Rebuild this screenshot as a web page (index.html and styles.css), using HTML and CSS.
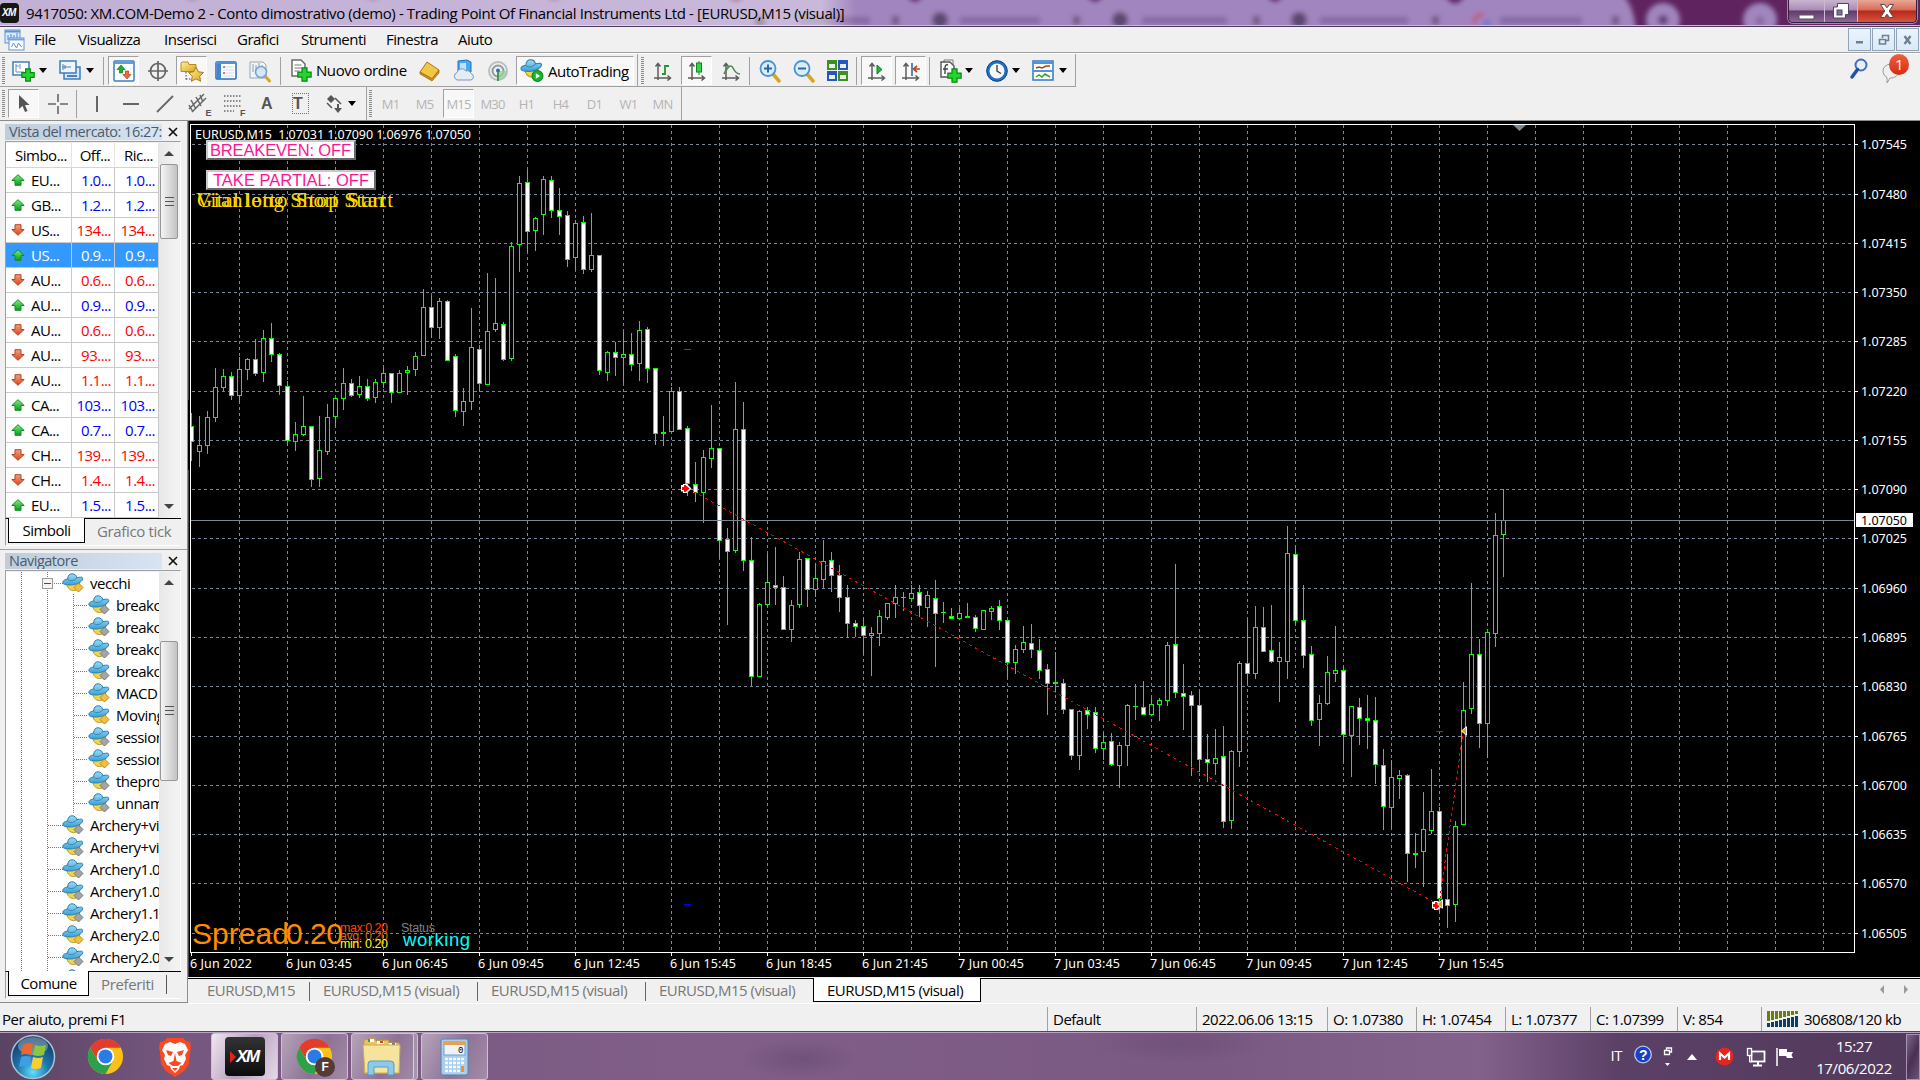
FILE: index.html
```html
<!DOCTYPE html>
<html lang="it">
<head>
  <meta charset="UTF-8">
  <title>9417050: XM.COM-Demo 2 - EURUSD,M15</title>
  <link rel="stylesheet" href="styles.css">
</head>
<body>

  <!-- icone condivise -->
  <svg class="defs" width="0" height="0">
    <defs>
      <linearGradient id="gGreen" x1="0" y1="0" x2="0" y2="1"><stop offset="0" stop-color="#7df07d"/><stop offset="1" stop-color="#0a9a1c"/></linearGradient>
      <linearGradient id="gRed" x1="0" y1="0" x2="0" y2="1"><stop offset="0" stop-color="#f3a184"/><stop offset="1" stop-color="#d8431a"/></linearGradient>
      <linearGradient id="gGold" x1="0" y1="0" x2="1" y2="1"><stop offset="0" stop-color="#fff0a0"/><stop offset="1" stop-color="#d9a51c"/></linearGradient>
      <linearGradient id="gHat" x1="0" y1="0" x2="0" y2="1"><stop offset="0" stop-color="#9bdcf5"/><stop offset="1" stop-color="#3c9fd2"/></linearGradient>
      <radialGradient id="gOrb" cx="50%" cy="85%" r="80%"><stop offset="0" stop-color="#5fe0ff"/><stop offset=".45" stop-color="#1f76ad"/><stop offset="1" stop-color="#123a63"/></radialGradient>
      <filter id="soft"><feGaussianBlur stdDeviation="2.5"/></filter>

      <symbol id="up" viewBox="0 0 14 12"><path d="M7 .7 13.2 6.5H10v4.8H4V6.5H.8z" fill="url(#gGreen)" stroke="#138a24"/></symbol>
      <symbol id="down" viewBox="0 0 14 12"><path d="M7 11.3 .8 5.5H4V.7h6v4.8h3.2z" fill="url(#gRed)" stroke="#b5431f"/></symbol>
      <symbol id="ea" viewBox="0 0 22 20">
        <path d="M4.500 9c0 5 3 8.500 7 8.500s6-3 6-7.500z" fill="#f3d548" stroke="#b99522"/>
        <path d="M1 10C.2 7.200 4 6.300 5.500 6 6 2.300 7.500.8 10 .8S14.500 2.300 14.800 4.700C18 4 21 3.600 20.700 5.800 20 9.300 14 11.800 8.500 12 4 12 1.300 11.500 1 10z" fill="url(#gHat)" stroke="#2a7fb0"/>
        <path d="M5.500 6.500q4.500 3 9.300-1.500" fill="none" stroke="#2a7fb0" stroke-width=".8"/>
      </symbol>
      <symbol id="plus" viewBox="0 0 12 12"><path d="M4 .7h4V4h3.300v4H8v3.300H4V8H.7V4H4z" fill="#23d52c" stroke="#078a12"/></symbol>
      <symbol id="axes" viewBox="0 0 20 20"><path d="M5 19V3M2.500 5.500 5 2.500 7.500 5.500M1 17h16M14.500 14.500 17.500 17 14.500 19.500" fill="none" stroke="#5c5c5c" stroke-width="1.500"/></symbol>
      <symbol id="chrome" viewBox="0 0 40 40">
        <circle cx="20" cy="20" r="19" fill="#fbc116"/>
        <path d="M3.500 10.500A19 19 0 0 1 36.500 10.500H20L11.800 24.700z" fill="#e33b2e"/>
        <path d="M3.500 10.500A19 19 0 0 0 20 39L28.200 24.700 11.800 24.700z" fill="#2da04a"/>
        <circle cx="20" cy="20" r="9.500" fill="#fff"/><circle cx="20" cy="20" r="7.500" fill="#2a7be8"/>
      </symbol>
    </defs>
  </svg>

  <header class="titlebar">
    <svg class="glass" width="1920" height="27">
      <rect width="1920" height="27" fill="#5f2460"/>
      <g filter="url(#soft)">
        <path d="M-10 -5H184Q192 4 200 -5H365Q373 4 381 -5H546Q554 4 562 -5H728Q736 8 744 -5H907Q915 8 923 -5H1087Q1095 8 1103 -5H1267Q1275 8 1283 -5H1445Q1455 12 1465 -5H1622Q1634 4 1636 32H-10z" fill="#a185be"/>
        <g fill="#5c4870"><circle cx="760" cy="22" r="6"/><circle cx="940" cy="20" r="8"/><circle cx="1120" cy="20" r="8"/><circle cx="1299" cy="20" r="8"/></g>
        <g fill="#6d5780"><rect x="892" y="16" width="7" height="9"/><rect x="1073" y="16" width="7" height="9"/><rect x="1253" y="16" width="7" height="9"/><rect x="1432" y="16" width="7" height="9"/><rect x="1612" y="16" width="7" height="9"/></g>
        <g fill="#8169a0"><rect x="800" y="17" width="70" height="7"/><rect x="960" y="17" width="80" height="7"/><rect x="1142" y="17" width="85" height="7"/><rect x="1320" y="17" width="88" height="7"/><rect x="1500" y="17" width="82" height="7"/></g>
        <circle cx="1663" cy="20" r="17" fill="#a185be"/><circle cx="1760" cy="20" r="17" fill="#a185be"/>
        <circle cx="1663" cy="20" r="5" fill="#5b3f72"/><circle cx="1760" cy="21" r="4" fill="#80629b"/>
        <path d="M1475 24a7 7 0 0 1 9-9" stroke="#c25378" stroke-width="4" fill="none"/><path d="M1485 25l4-4" stroke="#4a6fd2" stroke-width="5"/>
      </g>
      <rect y="25" width="1920" height="1" fill="#cdb7df"/>
      <rect y="26" width="1920" height="1" fill="#4b3a5c"/>
    </svg>
    <div class="caption">
      <svg width="19" height="21" viewBox="0 0 19 21"><rect width="19" height="20" rx="4" fill="#161616"/></svg>
      <b class="xm small">X<i>M</i></b>
      <span>9417050: XM.COM-Demo 2 - Conto dimostrativo (demo) - Trading Point Of Financial Instruments Ltd - [EURUSD,M15 (visual)]</span>
    </div>
    <div class="winbtns">
      <span class="wb min"><svg width="18" height="16"><rect x="1" y="9" width="15" height="4" fill="#fff" stroke="#555"/></svg></span>
      <span class="wb max"><svg width="18" height="18"><path d="M5.500 1.500h11v11h-3v3.500h-12v-11h4z" fill="#fff" stroke="#4d4860"/><rect x="5" y="8" width="5" height="5" fill="#82708f" stroke="#4d4860"/></svg></span>
      <span class="wb close"><svg width="16" height="16"><path d="M1.500 1.500h4L8 4.800l2.500-3.300h4L10.200 8l4.300 6.500h-4L8 11.200l-2.500 3.300h-4L5.800 8z" fill="#fff" stroke="#5a4a52"/></svg></span>
    </div>
  </header>

  <nav class="menubar">
    <svg class="appicon" width="22" height="22" viewBox="0 0 22 22"><rect x="1" y="1" width="15" height="13" fill="#dbeafb" stroke="#5b93d3"/><path d="M1 2.500h15" stroke="#5b93d3" stroke-width="2"/><path d="M4 11V6M7 9V5M10 11V6M13 9V4" stroke="#4a86d0"/><rect x="5" y="9" width="15" height="12" fill="#fff" stroke="#5b93d3"/><path d="M5 10.500h15" stroke="#6fa5de" stroke-width="2"/><path d="M7.500 18l2-4 3 5 2-5 3 4" fill="none" stroke="#5d8fce"/></svg>
    <span class="m1">File</span><span class="m2">Visualizza</span><span class="m3">Inserisci</span><span class="m4">Grafici</span><span class="m5">Strumenti</span><span class="m6">Finestra</span><span class="m7">Aiuto</span>
    <div class="mdi">
      <span><svg width="10" height="10"><rect x="1" y="6" width="7" height="2.500" fill="#6f7f92"/></svg></span>
      <span><svg width="12" height="12"><path d="M4.500 4V1.500h6v5H8M1.500 5.500h6v4.500h-6zM1 5.500h7M4 1.500h7" fill="none" stroke="#6f7f92" stroke-width="1.600"/></svg></span>
      <span><svg width="10" height="10"><path d="M1.500 1l6 8M7.500 1l-6 8" stroke="#6f7f92" stroke-width="2.400"/></svg></span>
    </div>
  </nav>

  <div class="toolbars">
    <div class="tools row1">
      <i class="grip"></i>
      <span class="tool drop d1"><svg width="24" height="24" viewBox="0 0 24 24"><rect x="1" y="3" width="16" height="13" fill="#fff" stroke="#3d7dbd" stroke-width="1.500"/><path d="M4 5v8h8M4 7h3M8 5v5" stroke="#6a8fb5" fill="none"/><use href="#plus" x="9" y="9" width="14" height="14"/></svg><i class="arr"></i></span>
      <span class="tool drop d2"><svg width="22" height="24" viewBox="0 0 22 24"><rect x="5" y="8" width="16" height="12" fill="#d5e7fa" stroke="#3d7dbd" stroke-width="1.500"/><path d="M8 17h10" stroke="#4d82bb" stroke-width="2"/><rect x="1" y="2" width="16" height="12" fill="#eef5fd" stroke="#3d7dbd" stroke-width="1.500"/><path d="M4 5v6M3 8h9M6 6v4" stroke="#5c7da2" fill="none"/></svg><i class="arr"></i></span>
      <i class="sep"></i>
      <span class="tool on"><svg width="22" height="22" viewBox="0 0 22 22"><rect x="1" y="1" width="20" height="20" rx="1" fill="#fff" stroke="#3d7dbd" stroke-width="1.500"/><path d="M1 3h20" stroke="#5c9ee0" stroke-width="2"/><path d="M8 5l4 4.500H9.500V13h-3V9.500H4z" fill="#1fae2c" stroke="#0c7c1a" stroke-width=".7"/><path d="M14 19l-4-4.500h2.500V11h3v3.500H18z" fill="#ef6a3c" stroke="#b83c14" stroke-width=".7"/></svg></span>
      <span class="tool"><svg width="22" height="22" viewBox="0 0 22 22" fill="none" stroke="#646464" stroke-width="1.700"><circle cx="11" cy="11" r="7.500"/><path d="M11 1v20M1 11h20"/></svg></span>
      <span class="tool on"><svg width="24" height="22" viewBox="0 0 24 22"><path d="M1 3V11.500H16V4.500H9L8 2H2z" fill="url(#gGold)" stroke="#b98c18"/><path d="M6 12v8M6 19h5" stroke="#444" stroke-dasharray="1.500 1.500"/><path d="M16 7l2.300 4.800 5.200.7-3.800 3.600.9 5.200-4.600-2.500-4.600 2.500.9-5.200-3.800-3.600 5.200-.7z" fill="url(#gGold)" stroke="#a87b17"/></svg></span>
      <span class="tool"><svg width="22" height="20" viewBox="0 0 22 20"><rect x="1" y="1" width="20" height="17" rx="1" fill="#fff" stroke="#2a68b6" stroke-width="1.500"/><path d="M1 2h20" stroke="#4d94de" stroke-width="2"/><rect x="2" y="3" width="4" height="15" fill="#3d86d6"/><path d="M8 6h11M8 9h11M8 12h11M8 15h11" stroke="#cbd8ea"/><path d="M8 6h2M8 12h2" stroke="#c00"/></svg></span>
      <span class="tool"><svg width="24" height="24" viewBox="0 0 24 24"><path d="M2 3h13l3 3v13H2z" fill="#f2f5f8" stroke="#9aa6b0"/><path d="M5 5v8M8 6v9M11 4v8M14 6v6" stroke="#86a0b8"/><path d="M17 17l4.500 5" stroke="#d9a622" stroke-width="3" stroke-linecap="round"/><circle cx="13" cy="13" r="5.500" fill="#cfe6f9cc" stroke="#79a5c8" stroke-width="1.600"/></svg></span>
      <i class="sep wide"></i>
      <span class="tool order"><svg width="24" height="24" viewBox="0 0 24 24"><path d="M3 2h9l4 4v12H3z" fill="#fff" stroke="#6b6b6b" stroke-width="1.500"/><path d="M5.500 7h7M5.500 10h7M5.500 13h5" stroke="#777"/><use href="#plus" x="8" y="9" width="15" height="15"/></svg>Nuovo ordine</span>
      <span class="tool"><svg width="22" height="22" viewBox="0 0 22 22"><path d="M1 12L8 2l12 8-7 10z" fill="#f2c744" stroke="#a87414"/><path d="M1 12l12 6.500 7-8.500v3l-7 8L1 14z" fill="#c98e20" stroke="#9b6a10" stroke-width=".7"/></svg></span>
      <span class="tool"><svg width="24" height="24" viewBox="0 0 24 24"><path d="M6 2l9-1 4 2v10H6z" fill="#4aa8ee" stroke="#1d72bb"/><path d="M8 4h6v7H8z" fill="#bfe2fb"/><path d="M5 21a4 4 0 0 1 0-7.500A5 5 0 0 1 14 12a4 4 0 0 1 5 2.500A3.400 3.400 0 0 1 19 21z" fill="#e4ecf6" stroke="#7f96b5"/></svg></span>
      <span class="tool"><svg width="22" height="22" viewBox="0 0 22 22" fill="none"><circle cx="11" cy="11" r="9" stroke="#b7c0bd" stroke-width="2"/><circle cx="11" cy="11" r="5.500" stroke="#8c9aa0" stroke-width="2"/><path d="M11 11v9a9 9 0 0 0 9-9" fill="#9ad0a0" stroke="none" opacity=".8"/><circle cx="11" cy="10.500" r="2" fill="#2d70ba"/><path d="M11 12v9" stroke="#3da04a" stroke-width="2"/></svg></span>
      <span class="tool on auto"><svg width="24" height="24" viewBox="0 0 22 22"><use href="#ea" width="21" height="19"/><circle cx="16" cy="15.500" r="5" fill="#17b42c" stroke="#0c8a1c"/><path d="M14.500 13v5l4-2.500z" fill="#fff"/></svg>AutoTrading</span>
      <i class="sep end"></i>
      <i class="grip g2"></i>
      <span class="tool"><svg width="20" height="20"><use href="#axes"/><path d="M12 4v10M12 5h4M9 13h3" stroke="#1d9632" stroke-width="1.800"/></svg></span>
      <span class="tool on"><svg width="20" height="20"><use href="#axes"/><path d="M12 0v14" stroke="#178a2a"/><rect x="9.500" y="2" width="5" height="9" fill="#2fd648" stroke="#0c8a1c"/></svg></span>
      <span class="tool"><svg width="20" height="20"><use href="#axes"/><path d="M3 13q6-12 9-6t7 6" fill="none" stroke="#4b8a50" stroke-width="1.600"/></svg></span>
      <i class="sep"></i>
      <span class="tool"><svg width="24" height="24" viewBox="0 0 24 24"><path d="M15 15l6 7" stroke="#d9a622" stroke-width="3.500" stroke-linecap="round"/><circle cx="10" cy="9.500" r="7.500" fill="#d9edfb" stroke="#4b93cf" stroke-width="1.800"/><path d="M6 9.500h8M10 5.500v8" stroke="#2b66a8" stroke-width="2"/></svg></span>
      <span class="tool"><svg width="24" height="24" viewBox="0 0 24 24"><path d="M15 15l6 7" stroke="#d9a622" stroke-width="3.500" stroke-linecap="round"/><circle cx="10" cy="9.500" r="7.500" fill="#d9edfb" stroke="#4b93cf" stroke-width="1.800"/><path d="M6 9.500h8" stroke="#2b66a8" stroke-width="2"/></svg></span>
      <span class="tool"><svg width="22" height="22" viewBox="0 0 22 22"><path d="M0 0h10v10H0z" fill="#3f8f23"/><path d="M11 0h10v10H11zM0 11h10v10H0z" fill="#2458c0"/><path d="M11 11h10v10H11z" fill="#3f8f23"/><path d="M2 4h6v4H2zM13 4h6v4h-6zM2 15h6v4H2zM13 15h6v4h-6z" fill="#e7f2e4"/></svg></span>
      <i class="sep"></i>
      <span class="tool on"><svg width="20" height="20"><use href="#axes"/><path d="M10 4v9l5-4.500z" fill="#24b53a" stroke="#128024"/></svg></span>
      <span class="tool on"><svg width="20" height="20"><use href="#axes"/><path d="M11 2v13" stroke="#2a6bb0" stroke-width="1.600"/><path d="M19 8h-5M16 5l-3.500 3 3.500 3" stroke="#c8401c" stroke-width="1.700" fill="none"/></svg></span>
      <i class="sep"></i>
      <span class="tool drop d3"><svg width="24" height="24" viewBox="0 0 24 24"><path d="M5 1h9v13H5z" fill="#fff" stroke="#777"/><path d="M2 3h9l4 4v11H2z" fill="#fff" stroke="#555" stroke-width="1.400"/><path d="M9 6q-3-1-3 3v6M4 10h5" fill="none" stroke="#444" stroke-width="1.400"/><use href="#plus" x="8" y="9" width="15" height="15"/></svg><i class="arr"></i></span>
      <span class="tool drop d4"><svg width="22" height="22" viewBox="0 0 22 22"><circle cx="11" cy="11" r="9" fill="#f4f8fc" stroke="#1f6fc4" stroke-width="3"/><circle cx="11" cy="11" r="10.300" fill="none" stroke="#0f468a"/><path d="M11 5v6l4 2.500" fill="none" stroke="#444" stroke-width="1.400"/></svg><i class="arr"></i></span>
      <span class="tool drop d5"><svg width="22" height="22" viewBox="0 0 22 22"><rect x="1" y="1" width="20" height="19" fill="#fff" stroke="#3579c0" stroke-width="1.500"/><path d="M1 3h20M1 11h20" stroke="#4d94de" stroke-width="2"/><path d="M4 8l3-1 3 1 4-2 4 0" stroke="#b23c24" fill="none" stroke-width="1.500"/><path d="M4 17l3-2 3 2 3-3 5 3" stroke="#3b9b45" fill="none" stroke-width="1.500"/></svg><i class="arr"></i></span>
      <i class="sep end"></i>
      <div class="right">
        <svg width="20" height="22" viewBox="0 0 20 22"><circle cx="12" cy="7" r="5.500" fill="#e6effa" stroke="#3f6fc4" stroke-width="2"/><path d="M8.500 11.500L3 19" stroke="#2450ac" stroke-width="3.500" stroke-linecap="round"/></svg>
        <span class="chat"><svg width="20" height="22" viewBox="0 0 20 22"><path d="M2 10a8 7 0 1 1 7 6l-3 5 0-5.500A7 7 0 0 1 2 10z" fill="#f0f0f0" stroke="#9b9b9b"/></svg><b>1</b></span>
      </div>
    </div>
    <div class="tools row2">
      <i class="grip"></i>
      <span class="tool on"><svg width="14" height="20" viewBox="0 0 14 20"><path d="M2 1v14l3.500-3 2.500 6 2.500-1-2.500-6h4.500z" fill="#555"/></svg></span>
      <span class="tool"><svg width="20" height="20"><path d="M10 0v8M10 12v8M0 10h8M12 10h8" stroke="#666" stroke-width="1.600"/></svg></span>
      <i class="sep"></i>
      <span class="tool"><svg width="20" height="20"><path d="M10 2v16" stroke="#666" stroke-width="2"/></svg></span>
      <span class="tool"><svg width="20" height="20"><path d="M2 10h16" stroke="#666" stroke-width="2"/></svg></span>
      <span class="tool"><svg width="20" height="20"><path d="M2 18L18 2" stroke="#666" stroke-width="1.800"/></svg></span>
      <span class="tool"><svg width="24" height="24"><path d="M2 17L17 2M5 20L19 6M4 8l5 9M9 5l5 9M13 3l3 7M2 13l4 7" stroke="#666" stroke-width="1.500"/></svg><sub>E</sub></span>
      <span class="tool"><svg width="22" height="22"><path d="M2 3h18M2 8h18M2 13h18M2 18h10" stroke="#666" stroke-width="1.600" stroke-dasharray="1.500 1.500"/></svg><sub>F</sub></span>
      <span class="tool"><b class="glyph">A</b></span>
      <span class="tool"><b class="glyph box">T</b></span>
      <span class="tool drop d6"><svg width="20" height="20"><path d="M6 1l4 4-4 4-4-4zM14 10v4h3l-4 5-4-5h3v-4z" fill="#555"/><path d="M2 9l5 5M10 4l6 6" stroke="#555" stroke-width="1.500"/></svg><i class="arr"></i></span>
      <i class="sep end"></i>
      <i class="grip g3"></i>
      <span class="tool tf">M1</span><span class="tool tf">M5</span><span class="tool tf on">M15</span><span class="tool tf">M30</span><span class="tool tf">H1</span><span class="tool tf">H4</span><span class="tool tf">D1</span><span class="tool tf">W1</span><span class="tool tf">MN</span>
      <i class="sep end"></i>
    </div>
  </div>

  <main>
    <aside>
      <section class="panel market">
        <h2><span>Vista del mercato: 16:27:</span><svg width="10" height="10"><path d="M1 1l8 8M9 1L1 9" stroke="#111" stroke-width="1.700"/></svg></h2>
        <div class="box">
          <div class="list">
            <div class="mrow head"><span>Simbo...</span><span>Off...</span><span>Ric...</span></div>
            <div id="quotes"></div>
          </div>
          <div class="scroll"><i class="sa up"></i><i class="thumb"></i><i class="sa dn"></i></div>
        </div>
        <div class="ptabs"><span class="act">Simboli</span><span class="off">Grafico tick</span></div>
      </section>
      <section class="panel navi">
        <h2><span>Navigatore</span><svg width="10" height="10"><path d="M1 1l8 8M9 1L1 9" stroke="#111" stroke-width="1.700"/></svg></h2>
        <div class="box">
          <div class="list" id="tree"></div>
          <div class="scroll"><i class="sa up"></i><i class="thumb"></i><i class="sa dn"></i></div>
        </div>
        <div class="ptabs"><span class="act">Comune</span><span class="off">Preferiti</span><i></i></div>
      </section>
    </aside>

    <div class="work">
      <svg id="chart" width="1732" height="856" viewBox="188 121 1732 856"></svg>
      <div class="ctabs">
        <span class="t0">EURUSD,M15</span><span>EURUSD,M15 (visual)</span><span>EURUSD,M15 (visual)</span><span>EURUSD,M15 (visual)</span><span class="act">EURUSD,M15 (visual)</span>
        <svg width="34" height="14" viewBox="0 0 34 14"><path d="M7 2v9L3 6.500zM27 2v9l4-4.500z" fill="#9a9a9a"/></svg>
      </div>
    </div>
  </main>

  <footer class="status">
    <span class="help">Per aiuto, premi F1</span>
    <span class="s1">Default</span><span class="s2">2022.06.06 13:15</span><span class="s3">O: 1.07380</span><span class="s4">H: 1.07454</span><span class="s5">L: 1.07377</span><span class="s6">C: 1.07399</span><span class="s7">V: 854</span>
    <span class="s8"><svg id="conn" width="32" height="17"></svg>306808/120 kb</span>
  </footer>

  <div class="taskbar">
    <svg class="orb" width="46" height="46" viewBox="0 0 46 46"><circle cx="23" cy="23" r="21.500" fill="url(#gOrb)" stroke="#a9c4d6" stroke-width="1.500"/><ellipse cx="23" cy="12" rx="15" ry="9" fill="#fff" opacity=".3"/><path d="M13 11q5-3 10-1l-2 11q-5-2-10 0z" fill="#f0652b"/><path d="M25 11q5 2 11 0l-2 10q-6 2-11 0z" fill="#8cc63c"/><path d="M11 23q5-2 10 0l-2 10q-4-2-10 0z" fill="#3f9fe6"/><path d="M23 23q5 2 10 0l-2 11q-5 2-10 0z" fill="#fccc33"/></svg>
    <svg class="t-chrome" width="37" height="37"><use href="#chrome"/></svg>
    <svg class="t-brave" width="34" height="40" viewBox="0 0 34 40"><path d="M9 1h16l3 3 4 1 1 6-1 4-1 12-5 7-9 6-9-6-5-7-1-12-1-4 1-6 4-1z" fill="#fb4a22"/><path d="M17 7l5-2 5 2 3 6-3 5 1 4-3 6-3 1-1 3-4 4-4-4-1-3-3-1-3-6 1-4-3-5 3-6 5-2z" fill="#fff"/><path d="M8 13l7 2-2 4-3-1zM26 13l-7 2 2 4 3-1zM17 16l1.500 8 5 2-4 3h-5l-4-3 5-2zM14 31h6l-3 3z" fill="#fb4a22"/></svg>
    <span class="tb hot"><span class="xmlogo"><svg width="6" height="14" viewBox="0 0 6 14"><path d="M0 1l6 6-6 6z" fill="#e2231a"/></svg><b class="xm">XM</b></span></span>
    <span class="tb"><svg width="40" height="40" viewBox="0 0 40 40"><use href="#chrome" x="1" y="1" width="37" height="37"/></svg><b class="badge">F</b></span>
    <span class="tb multi"><svg width="42" height="40" viewBox="0 0 42 40"><path d="M3 3l10-2 2 3 12-1 1 3 10 0v30H3z" fill="#e6c566" stroke="#c59d39"/><path d="M7 2h6v3H7zM16 4h7v3h-7zM28 6h7v3h-7z" fill="#fff"/><path d="M7 2h2v3H7z" fill="#2fa45a"/><path d="M19 4h3v2h-3z" fill="#d8452f"/><path d="M31 6h3v2h-3z" fill="#2b8ad0"/><path d="M2 8h37l-1 28H4z" fill="#f6e49c" stroke="#d2ae4d"/><path d="M7 38V27q0-3 3-3h19q4 0 4 3v11h-6v-8H13v8z" fill="#8cc9ea" stroke="#4f9dcb"/></svg></span>
    <span class="tb calc"><svg width="30" height="38" viewBox="0 0 30 38"><rect x="1" y="1" width="27" height="36" rx="2" fill="#a9cdea" stroke="#4e86b5"/><rect x="4" y="4" width="21" height="13" fill="#eef5fa" stroke="#6aa2d0"/><rect x="4" y="4" width="21" height="3" fill="#e9a14c"/><path d="M5 21h19M5 25h19M5 29h19M5 33h19" stroke="#f5fafe" stroke-width="2.500" stroke-dasharray="3 1"/><path d="M21 28h3v6h-3z" fill="#f0941f"/><text x="18" y="15" font-size="9" font-family="Liberation Mono">0</text></svg></span>
    <div class="tray">
      <span class="lang">IT</span>
      <svg width="18" height="19" viewBox="0 0 18 19"><circle cx="9" cy="9.500" r="8.300" fill="#1b40c8" stroke="#b9c8ef" stroke-width="1.300"/><text x="9" y="14.500" text-anchor="middle" font-size="14" font-weight="bold" fill="#fff" font-family="Liberation Sans">?</text></svg>
      <svg class="opt" width="10" height="22" viewBox="0 0 10 22"><path d="M3.500 5V2h5v4h-2M1.500 4.500h5v4h-5z" fill="none" stroke="#fff" stroke-width="1.300"/><path d="M2 17h5l-2.500 3z" fill="#fff"/></svg>
      <svg class="upa" width="10" height="6"><path d="M0 6h10L5 0z" fill="#fff"/></svg>
      <svg class="mega" width="19" height="19"><circle cx="9.500" cy="9.500" r="9" fill="#e5261d"/><path d="M5 13V6.500l4.500 4 4.500-4V13" fill="none" stroke="#fff" stroke-width="2.200"/></svg>
      <svg class="net" width="20" height="20" viewBox="0 0 20 20"><rect x="5.500" y="4.500" width="13" height="10" fill="#5d4a66" stroke="#fff" stroke-width="1.800"/><path d="M7 18.500h9M12 15v3" stroke="#fff" stroke-width="2"/><rect x="1.500" y="1.500" width="4" height="7" fill="#5d4a66" stroke="#fff" stroke-width="1.300"/><path d="M3.500 9v6h2" stroke="#fff" fill="none"/></svg>
      <svg class="flag" width="20" height="20" viewBox="0 0 20 20"><path d="M2 1v18" stroke="#fff" stroke-width="1.500"/><path d="M4 2h8v3h6l-1.500 3 1.500 3h-6l-1-2H4z" fill="#fff"/></svg>
      <div class="clock"><span>15:27</span><span>17/06/2022</span></div>
      <i class="desk"></i>
    </div>
  </div>

  <script src="app.js"></script>
</body>
</html>
```
FILE: styles.css
```css
* { box-sizing: border-box; }
body {
  margin: 0;
  width: 1920px;
  height: 1080px;
  overflow: hidden;
  display: grid;
  grid-template-rows: 27px 26px 68px 882px 29px 48px;
  background: #f0f0f0;
  font: 15px/20px "Open Sans", "Noto Sans", sans-serif;
  letter-spacing: -0.5px;
  color: #000;
}
.defs { position: absolute; }
i { font-style: normal; }
svg { display: block; flex: none; }

/* title bar */
.titlebar { position: relative; display: flex; justify-content: space-between; }
.glass { position: absolute; left: 0; top: 0; }
.caption {
  position: relative;
  display: flex;
  align-items: center;
  height: 26px;
  width: 856px;
  white-space: nowrap;
  letter-spacing: -0.38px;
  background: linear-gradient(90deg, rgba(255,255,255,.35), rgba(255,255,255,.42) 96%, transparent);
}
.caption span { margin-left: 7px; }
.xm { font: italic bold 17px "Liberation Sans", sans-serif; letter-spacing: -1.5px; color: #fff; }
.xm i { font-style: italic; }
.xm.small { position: absolute; left: 2px; top: 7px; font-size: 10px; line-height: 12px; letter-spacing: -.6px; }
.winbtns {
  position: relative;
  display: flex;
  width: 129px;
  height: 23px;
  margin-right: 3px;
  border: 1px solid #33203c;
  border-top: 0;
  border-radius: 0 0 5px 5px;
  overflow: hidden;
  box-shadow: 0 0 0 1px rgba(255,255,255,.45);
}
.wb { display: flex; align-items: center; justify-content: center; border-right: 1px solid #cbb9d4; background: linear-gradient(#c9b5cf 0, #a98bb4 45%, #603a6c 50%, #8a6a96); }
.wb.min { width: 36px; padding-top: 5px; }
.wb.max { width: 33px; }
.wb.close { flex: 1; border: 0; background: linear-gradient(#e9a796 0, #d96c55 45%, #b6281a 50%, #d8553c); }

/* menu */
.menubar { display: flex; align-items: center; height: 26px; border-bottom: 1px solid #a0a0a0; padding-left: 4px; letter-spacing: -.5px; }
.menubar > span { flex: none; white-space: nowrap; padding-bottom: 2px; }
.appicon { margin-right: 8px; }
.m1 { width: 44px; } .m2 { width: 86px; } .m3 { width: 73px; } .m4 { width: 64px; } .m5 { width: 85px; } .m6 { width: 72px; }
.mdi { margin-left: auto; display: flex; gap: 1px; padding-right: 1px; }
.mdi span { display: flex; align-items: center; justify-content: center; width: 23px; height: 23px; border: 1px solid #91a3b7; background: linear-gradient(#eaf4fd, #dbeaf8); }

/* toolbars */
.toolbars { border-top: 1px solid #fff; border-bottom: 1px solid #8c8c8c; background: #f0f0f0; }
.tools { display: flex; align-items: center; gap: 3px; }
.row1 { height: 33px; background: linear-gradient(90deg, #a0a0a0 1076px, transparent 0) 0 32px / 100% 1px no-repeat; }
.row2 { height: 33px; }
.grip { width: 3px; height: 28px; margin: 0 0 0 2px; background: repeating-linear-gradient(#8a8a8a 0 1px, transparent 1px 2px); }
.sep { width: 2px; height: 28px; border-left: 1px solid #a0a0a0; }
.sep.wide { margin-left: 2px; }
.sep.end { height: 33px; }
.grip.g2 { margin-left: -1px; }
.grip.g3 { margin-left: -2px; }
.tool { position: relative; flex: none; width: 31px; height: 29px; display: flex; align-items: center; justify-content: center; white-space: nowrap; }
.tool.on { border: 1px solid #a0a0a0; border-right-color: #fff; border-bottom-color: #fff; background: #f8f8f8; }
.tool.drop { justify-content: flex-start; }
.arr { border: 5px solid transparent; border-top-color: #000; border-bottom: 0; transform: scaleX(.8); }
.d1 { width: 43px; padding-left: 4px; } .d1 .arr { margin-left: 2px; }
.d2 { width: 46px; padding-left: 5px; } .d2 .arr { margin-left: 4px; }
.d3 { width: 44px; padding-left: 5px; } .d3 .arr { margin-left: 1px; }
.d4 { width: 44px; padding-left: 5px; } .d4 .arr { margin-left: 3px; }
.d5 { width: 44px; padding-left: 4px; } .d5 .arr { margin-left: 4px; }
.d6 { width: 44px; padding-left: 6px; } .d6 .arr { margin-left: 2px; }
.order { width: 126px; justify-content: flex-start; padding-left: 4px; gap: 3px; padding-bottom: 2px; letter-spacing: -.42px; }
.auto { width: 118px; justify-content: flex-start; padding-left: 3px; gap: 4px; }
.tool sub { position: absolute; right: 3px; bottom: 0; font: bold 9px/10px "Liberation Sans", sans-serif; color: #555; background: #f0f0f0; }
.glyph { font: bold 16px/18px "Liberation Sans", sans-serif; color: #555; }
.glyph.box { width: 17px; text-align: center; border: 1px dotted #777; }
.tf { font-size: 13px; letter-spacing: -.8px; color: #b4b4b4; }
.right { margin-left: auto; margin-right: 10px; display: flex; gap: 12px; }
.chat { position: relative; width: 29px; }
.chat svg { margin-top: 4px; }
.chat b { position: absolute; left: 8px; top: -4px; width: 20px; height: 21px; border-radius: 50%; background: linear-gradient(#f0603c, #d32d12); color: #fff; font-weight: 400; text-align: center; }

main { display: flex; }

/* left panels */
aside { width: 188px; border-right: 1px solid #8c8c8c; border-bottom: 1px solid #8c8c8c; padding-top: 3px; }
.panel { padding-left: 5px; padding-right: 6px; }
.panel.market { height: 426px; border-bottom: 1px solid #a0a0a0; }
.panel.navi { padding-top: 3px; }
.panel h2 { margin: 0 0 1px; height: 16px; display: flex; align-items: center; justify-content: space-between; font-size: 14.500px; line-height: 16px; font-weight: 400; color: #4c5b6c; padding-right: 3px; }
.panel h2 span { width: 157px; overflow: hidden; white-space: nowrap; padding-left: 4px; background: linear-gradient(90deg, #bfcddb, #d7e4f2); }
.box { display: flex; border: 1px solid #a0a0a0; border-bottom: 0; border-right-color: #fff; padding-top: 1px; }
.market .box { height: 377px; }
.navi .box { height: 401px; }
.list { width: 153px; background: #fff; overflow: hidden; }
.mrow { display: grid; grid-template-columns: 66px 43px 44px; height: 25px; border-bottom: 1px solid #c9c9c9; white-space: nowrap; }
.mrow span { display: flex; align-items: center; justify-content: flex-end; padding-right: 3px; border-right: 1px solid #c9c9c9; }
.mrow span:first-child { justify-content: flex-start; padding-left: 5px; gap: 6px; }
.mrow.head { border-bottom-color: #d5d5d5; }
.mrow.head span { border-color: #e4e4e4; padding-left: 4px; justify-content: center; padding-right: 0; }
.mrow.head span:first-child { padding-left: 5px; }
.mrow.up { color: #0000ff; }
.mrow.down { color: #ff0000; }
.mrow.up span:first-child, .mrow.down span:first-child { color: #000; }
.mrow.sel, .mrow.up.sel span { background: #3399ff; color: #fff; }
.scroll { width: 20px; display: flex; flex-direction: column; align-items: center; background: linear-gradient(90deg, #e8e8e8, #f4f4f4); padding: 8px 0 9px; }
.sa { border: 5px solid transparent; }
.sa.up { border-bottom-color: #444; border-top: 0; }
.sa.dn { border-top-color: #444; border-bottom: 0; margin-top: auto; }
.thumb { width: 18px; height: 75px; margin-top: 8px; border: 1px solid #979797; border-radius: 2px; background: repeating-linear-gradient(#555 0 1px, transparent 1px 4px) 4px 50% / 9px 10px no-repeat, linear-gradient(90deg, #f4f4f4, #dcdcdc 50%, #c2c2c7); }
.navi .thumb { height: 140px; margin-top: 56px; }
.ptabs { display: flex; align-items: flex-start; border-top: 1px solid #000; border-left: 1px solid #a0a0a0; border-bottom: 1px solid #fff; height: 28px; padding-left: 2px; line-height: 24px; white-space: nowrap; }
.ptabs .act { height: 25px; margin-top: -1px; background: #fff; border: solid #000; border-width: 0 1px 1px; width: 77px; text-align: center; }
.navi .ptabs .act { width: 81px; }
.ptabs .off { color: #777; padding-left: 12px; letter-spacing: -.35px; }
.ptabs i { width: 1px; height: 19px; margin: 3px 0 0 12px; background: #555; }

.node { position: relative; display: flex; align-items: center; height: 22px; white-space: nowrap; padding-left: 56px; gap: 6px; background:
  repeating-linear-gradient(#777 0 1px, transparent 1px 2px) 15px 0 / 1px 100% no-repeat,
  repeating-linear-gradient(#777 0 1px, transparent 1px 2px) 41px 0 / 1px 100% no-repeat,
  repeating-linear-gradient(90deg, #777 0 1px, transparent 1px 2px) 42px 11px / 15px 1px no-repeat; }
.node.sub { padding-left: 82px; background:
  repeating-linear-gradient(#777 0 1px, transparent 1px 2px) 15px 0 / 1px 100% no-repeat,
  repeating-linear-gradient(#777 0 1px, transparent 1px 2px) 41px 0 / 1px 100% no-repeat,
  repeating-linear-gradient(#777 0 1px, transparent 1px 2px) 67px 0 / 1px 100% no-repeat,
  repeating-linear-gradient(90deg, #777 0 1px, transparent 1px 2px) 68px 11px / 14px 1px no-repeat; }
.minus { position: absolute; left: 36px; top: 6px; width: 11px; height: 11px; border: 1px solid #999; background: linear-gradient(#2b4f9a, #2b4f9a) 50% 50% / 7px 1px no-repeat, #f4f4f4; }

/* chart */
.work { flex: 1; }
#chart { background: #000; box-shadow: inset 1px 0 #444; }
#chart text { letter-spacing: 0; white-space: pre; }
.axis { font-family: "Noto Sans", sans-serif; font-size: 12.500px; fill: #fff; }
.ctabs { display: flex; height: 26px; margin-top: 1px; border-top: 1px solid #000; border-bottom: 1px solid #fff; line-height: 23px; color: #777; }
.ctabs span { width: 168px; padding-left: 13px; white-space: nowrap; background: linear-gradient(#666, #666) 100% 3px / 1px 19px no-repeat; }
.ctabs .t0 { width: 122px; padding-left: 19px; }
.ctabs span:nth-child(4) { background: none; width: 167px; }
.ctabs .act { height: 24px; margin-top: -1px; background: #fff; color: #000; border: solid #000; border-width: 0 1px 1px; line-height: 25px; }
.ctabs svg { margin: 4px 9px 0 auto; }

/* status bar */
.status { display: flex; align-items: center; border-bottom: 1px solid #4c4c4c; padding-left: 2px; padding-top: 4px; white-space: nowrap; }
.status span { height: 24px; padding-left: 5px; line-height: 24px; border-left: 1px solid #a0a0a0; }
.status .help { width: 1045px; padding: 0; border: 0; letter-spacing: -.45px; }
.s1 { width: 149px; } .s2 { width: 131px; } .s3 { width: 89px; } .s4 { width: 89px; } .s5 { width: 85px; } .s6 { width: 87px; } .s7 { width: 84px; }
.status .s8 { display: flex; align-items: center; gap: 5px; padding-left: 5px; }

/* taskbar */
.taskbar { display: flex; align-items: center; border-top: 1px solid #b9a3c4; background:
  radial-gradient(ellipse 60px 20px at 800px 26px, rgba(60,40,80,.22), transparent),
  radial-gradient(ellipse 90px 20px at 1180px 10px, rgba(60,40,80,.16), transparent),
  linear-gradient(90deg, #5a4363 0, #76577f 180px, #805e87 700px, #7a5982 1200px, #82618b 1480px, #5b4065 1620px, #523a5c); }
.orb { margin-left: 10px; }
.t-chrome { margin-left: 31px; }
.t-brave { margin-left: 34px; margin-right: 19px; }
.tb { position: relative; width: 67px; height: 47px; margin-right: 3px; display: flex; align-items: center; justify-content: center; border: 1px solid #d0bfd6; border-radius: 3px; background: linear-gradient(115deg, rgba(255,255,255,.45), rgba(255,255,255,.15) 55%, rgba(255,255,255,.3)); }
.tb.hot { background: linear-gradient(115deg, #efe8f1, #b79fbe 50%, #e4d9e8); }
.tb.multi { padding-right: 5px; box-shadow: inset -3px 0 rgba(40,20,50,.3), inset -4px 0 rgba(255,255,255,.6); }
.xmlogo { width: 40px; height: 39px; border-radius: 4px; background: linear-gradient(#333, #0c0c0c); display: flex; align-items: center; justify-content: center; }
.badge { position: absolute; left: 33px; top: 23px; width: 20px; height: 20px; border-radius: 50%; background: #563a35; color: #fff; font: bold 12px/20px "Liberation Sans", sans-serif; text-align: center; }
.tray { margin-left: auto; display: flex; align-items: center; height: 47px; color: #fff; }
.lang { margin-right: 12px; padding-bottom: 4px; }
.tray > svg:nth-of-type(1) { margin-bottom: 4px; }
.opt { margin-left: 11px; }
.upa { margin-left: 14px; }
.mega { margin-left: 18px; }
.net { margin-left: 12px; }
.flag { margin-left: 9px; }
.clock { width: 94px; margin-left: 12px; display: flex; flex-direction: column; text-align: center; line-height: 22px; letter-spacing: -.4px; }
.desk { width: 14px; height: 46px; margin-left: 5px; border: 1px solid #a893b2; background: linear-gradient(115deg, #7d6587, #4a3154 50%, #6b5276); }
```
FILE: app.js
```js
const NS = 'http://www.w3.org/2000/svg';
const chart = document.getElementById('chart');

function el(name, attrs, parent, text) {
  const e = document.createElementNS(NS, name);
  for (const k in attrs) e.setAttribute(k, attrs[k]);
  if (text) e.textContent = text;
  (parent || chart).appendChild(e);
  return e;
}

// --- griglia e assi ---
const grid = el('g', { stroke: '#778899', 'stroke-dasharray': '3 3', 'shape-rendering': 'crispEdges' });
for (let x = 239; x < 1854; x += 48) el('path', { d: `M${x + .5} 125V951` }, grid);

const levels = [144, 194, 243, 292, 341, 391, 440, 489, 538, 588, 637, 686, 736, 785, 834, 883, 933];
levels.forEach((y, i) => {
  el('path', { d: `M192 ${y + .5}H1854` }, grid);
  el('path', { d: `M1854 ${y + .5}h4`, stroke: '#fff', 'shape-rendering': 'crispEdges' });
  el('text', { x: 1861, y: y + 5, class: 'axis', textLength: 46 }, chart, (1.07545 - i * 0.00065).toFixed(5));
});
el('path', { d: 'M190.5 124V953M190 124.5H1855M1854.5 124V953M190 952.5H1855', stroke: '#fff', 'shape-rendering': 'crispEdges' });

const times = ['6 Jun 2022', '6 Jun 03:45', '6 Jun 06:45', '6 Jun 09:45', '6 Jun 12:45', '6 Jun 15:45', '6 Jun 18:45', '6 Jun 21:45',
  '7 Jun 00:45', '7 Jun 03:45', '7 Jun 06:45', '7 Jun 09:45', '7 Jun 12:45', '7 Jun 15:45'];
times.forEach((t, i) => {
  const x = 191 + i * 96;
  el('path', { d: `M${x + .5} 953v3`, stroke: '#fff', 'shape-rendering': 'crispEdges' });
  el('text', { x: x - 1, y: 968, class: 'axis', textLength: i ? 66 : 62 }, chart, t);
});

// --- candele: [max, alto corpo, basso corpo, min, ribassista] ---
const blocks = [
  { first: 0, top: 120, k: 3, bars: [
    [880,919,964,1025,1],[888,976,995,1043,0],[873,891,977,1004,0],[744,802,893,908,0],[747,769,803,815,0],[756,769,827,842,1],
    [711,748,827,848,0],[714,718,749,780,0],[657,718,761,770,1],[630,655,758,788,0],[609,655,704,728,1],[699,703,797,827,1],
    [784,799,962,980,1],[906,943,965,995,0],[828,919,944,948,0],[919,919,1079,1103,1],[888,991,1076,1101,0],[852,892,995,1007,0],
    [835,835,890,920,0],[744,790,836,872,0],[777,790,827,831,1],[768,799,824,836,0],[777,799,836,845,1],[777,787,833,851,0],
    [744,760,788,806,0],[760,760,818,851,1],[751,760,818,821,0],[738,751,758,827,0],[697,709,749,770,0],[507,562,707,707,0],
    [528,562,623,656,1],[534,544,623,657,0],[540,544,721,722,1],[702,709,872,893,1],[804,844,875,920,0],[564,682,845,872,0],
    [675,688,791,815,1],[459,634,794,797,0],[474,610,629,638,0],[606,613,719,725,1],[366,379,716,725,0],[168,190,374,458,0],
    [150,187,335,396,1],[291,295,332,395,0],[168,178,284,345,0],[168,181,272,296,1],[204,271,290,347,1],[273,286,419,443,1],
    [300,310,413,451,0],[288,307,449,464,1],[279,406,449,458,0],[406,406,752,767,1],[693,697,758,785,0]] },
  { first: 53, top: 140, k: 2.8, bars: [
    [568,595,609,661,1],[538,600,609,682,0],[543,600,629,647,1],[507,533,626,675,0],[526,530,640,683,1],[639,639,822,854,1],
    [773,819,822,857,1],[694,704,815,817,0],[692,704,811,811,1],[801,807,962,997,1],[904,964,987,1014,1],[868,889,987,1075,0],
    [742,863,892,921,0],[863,863,1122,1173,1],[1089,1118,1153,1358,1],[678,810,1150,1159,0],[736,810,1178,1207,1],[1114,1177,1503,1531,1],
    [1297,1300,1503,1503,0],[1161,1239,1301,1308,0],[1142,1247,1253,1302,1],[1221,1253,1371,1374,1],[1288,1303,1371,1408,0],[1154,1174,1301,1313,0],
    [1171,1171,1259,1310,1],[1187,1227,1259,1282,0],[1120,1180,1231,1255,0],[1156,1177,1220,1268,1],[1190,1219,1281,1324,1],[1246,1281,1354,1397,1],
    [1344,1353,1363,1394,1],[1340,1362,1388,1442,1],[1366,1381,1388,1503,0],[1316,1334,1382,1417,0],[1297,1297,1338,1344,0],[1246,1281,1298,1341,0],
    [1266,1281,1281,1319,0],[1246,1269,1284,1284,0],[1246,1267,1304,1336,1],[1263,1275,1309,1364,0],[1232,1283,1326,1476,1],[1296,1323,1323,1355,0],
    [1313,1334,1340,1341,1],[1311,1325,1340,1340,0],[1299,1334,1337,1337,1],[1330,1337,1368,1380,1],[1317,1317,1371,1371,0],[1305,1311,1321,1346,0],
    [1288,1306,1346,1372,1],[1345,1345,1463,1507,1]] },
  { first: 103, top: 540, k: 3, bars: [
    [315,328,368,402,0],[258,307,329,339,0],[252,310,329,354,1],[297,331,392,417,1],[372,388,431,525,1],[338,427,431,457,1],
    [417,430,509,524,1],[508,508,647,662,1],[510,514,647,690,0],[501,511,524,567,1],[501,517,626,639,1],[579,607,626,660,0],
    [579,604,674,678,1],[606,616,677,744,0],[492,496,617,678,0],[432,499,499,540,0],[423,502,524,527,1],[474,493,524,524,0],
    [474,481,494,543,0],[306,316,482,500,0],[72,313,458,476,1],[372,460,470,570,1],[453,466,497,708,1],[456,496,659,696,1],
    [582,658,668,726,1],[567,655,671,705,0],[558,649,845,864,1],[630,634,842,867,0],[363,370,635,681,0],[237,370,401,432,1],
    [198,262,401,417,0],[201,262,335,335,1],[195,331,365,369,1],[306,352,365,486,0],[-42,40,365,419,0],[19,43,242,252,1],
    [135,241,347,384,1],[318,343,542,560,1],[465,490,539,618,0],[348,397,491,497,0],[258,391,401,426,0],[381,391,584,666,1],
    [499,499,587,711,0],[474,502,536,615,1],[465,535,542,627,1],[471,541,674,732,1],[627,676,800,870,1],[661,712,803,864,0],
    [690,706,716,777,0],[702,706,941,1028,1],[879,940,943,984,1],[756,868,935,1041,0],[687,814,872,884,0],[801,814,1076,1116,1]] },
  { first: 157, top: 460, k: 3, bars: [
    [1182,1318,1336,1404,1],[1083,1099,1333,1386,0],[666,751,1093,1093,0],[369,583,745,762,0],[537,583,790,864,1],[517,517,790,894,0],
    [159,226,520,561,0],[87,181,223,351,0]] }
];
const candles = el('g', { stroke: '#00ff00', 'shape-rendering': 'crispEdges' });
blocks.forEach(b => b.bars.forEach((c, i) => {
  const x = 191 + 8 * (b.first + i);
  const [hi, top, bot, lo] = c.slice(0, 4).map(v => b.top + Math.floor(v / b.k));
  el('path', { d: `M${x + .5} ${hi}V${lo}` }, candles);
  if (bot === top) el('path', { d: `M${x - 2} ${top + .5}h5` }, candles);
  else el('rect', { x: x - 1.5, y: top + .5, width: 4, height: bot - top, fill: c[4] ? '#fff' : '#000' }, candles);
}));
// la prima candela esce dal bordo sinistro
el('rect', { x: 188, y: 400, width: 2, height: 70, fill: '#000' });
el('path', { d: 'M190.5 400V470', stroke: '#fff' });

el('path', { d: 'M191 520.5H1854', stroke: '#778899', 'shape-rendering': 'crispEdges' });
el('rect', { x: 1856, y: 513, width: 57, height: 14, fill: '#fff' });
el('text', { x: 1861, y: 525, class: 'axis', textLength: 46, style: 'fill:#000' }, chart, '1.07050');

// --- ordini ---
const orders = el('g', { stroke: '#ff0000', fill: 'none', 'shape-rendering': 'crispEdges' });
el('path', { d: 'M687 488L1439 905', 'stroke-dasharray': '3 3.86' }, orders);
el('path', { d: 'M1439 905L1463 732', 'stroke-dasharray': '3 3' }, orders);
el('path', { d: 'M684 335.5h7M1436 731.5h7' }, orders);
el('path', { d: 'M684 904.500h7', stroke: '#0000ff' }, orders);
orders.querySelectorAll('path')[2].setAttribute('d', 'M684 349.5h7M1436 731.5h7');
[[681, 488], [1432, 905]].forEach(([x, y]) => {
  el('path', { d: `M${x} ${y - 3}h2v-1h4l4.500 4.500-4.500 4.500h-4v-1.500h-2z`, fill: '#fff' });
  el('path', { d: `M${x + 1} ${y - 1}h2v-2h1.500l4 3.500-4 3.500h-1.500v-2h-2z`, fill: '#f00' });
});
[[1462, 731], [1438, 904]].forEach(([x, y]) => {
  el('path', { d: `M${x - 1} ${y}l5-4.500h1v9h-1z`, fill: '#fff' });
  el('path', { d: `M${x} ${y}l4-3.500v7z`, fill: '#daa520' });
});
el('path', { d: 'M1513 125h13l-6.500 6z', fill: '#778899' });

// --- testi ed etichette ---
el('text', { x: 195, y: 139, class: 'axis', textLength: 276 }, chart, 'EURUSD,M15  1.07031 1.07090 1.06976 1.07050');

function button(x, y, w, label, tx, tl) {
  el('rect', { x, y, width: w, height: 20, fill: '#696969' });
  el('path', { d: `M${x} ${y}h${w}l-2 2h-${w - 4}v16l-2 2z`, fill: '#c8c8c8' });
  el('rect', { x: x + 2, y: y + 2, width: w - 4, height: 16, fill: '#fff' });
  el('text', { x: tx, y: y + 16, textLength: tl, 'font-family': 'Liberation Sans', 'font-size': 16.5, fill: '#ff1493' }, chart, label);
}
button(206, 140, 150, 'BREAKEVEN: OFF', 210, 141);
button(206, 170, 170, 'TAKE PARTIAL: OFF', 213, 156);

function label(x, y, size, color, text, len, font) {
  const a = { x, y, 'font-family': font || 'Liberation Sans', 'font-size': size, fill: color };
  if (len) a.textLength = len;
  el('text', a, chart, text);
}
label(196, 207, 21, '#ffd700', 'Vital long Short Start', 190, 'Liberation Serif');
label(197, 207, 21, '#ffd700', 'Gianletto Stop Start', 196, 'Liberation Serif');
label(192, 944, 30, '#ff8c00', 'Spread', 97);
label(286, 944, 30, '#ff8c00', '0.20', 57);
label(340, 932, 12.5, '#ff4500', 'max:0.20', 48);
label(340, 940, 12.5, '#d2691e', 'avg: 0.20', 48);
label(340, 948, 12.5, '#ffff00', 'min: 0.20', 48);
label(401, 932, 12.5, '#808080', 'Status', 34);
label(403, 946, 18.5, '#00ffff', 'working', 67);

// --- vista del mercato ---
const quotes = [['EU', '1.0', 1], ['GB', '1.2', 1], ['US', '134', 0], ['US', '0.9', 1, 'sel'], ['AU', '0.6', 0], ['AU', '0.9', 1], ['AU', '0.6', 0],
  ['AU', '93.', 0], ['AU', '1.1', 0], ['CA', '103', 1], ['CA', '0.7', 1], ['CH', '139', 0], ['CH', '1.4', 0], ['EU', '1.5', 1]];
document.getElementById('quotes').innerHTML = quotes.map(([s, p, up, sel]) => {
  const d = up ? 'up' : 'down';
  return `<div class="mrow ${d} ${sel || ''}"><span><svg width="14" height="12"><use href="#${d}"/></svg>${s}...</span><span>${p}...</span><span>${p}...</span></div>`;
}).join('');

// --- navigatore: nome, livello, rombo colorato ---
const nodes = [['vecchi', 0, 1], ['breakout', 1, 0], ['breakout', 1, 0], ['breakout', 1, 0], ['breakout', 1, 0], ['MACD S', 1, 1], ['Moving', 1, 1],
  ['session', 1, 0], ['session', 1, 1], ['thepro', 1, 0], ['unnam', 1, 0], ['Archery+vi', 0, 0], ['Archery+vi', 0, 0], ['Archery1.0', 0, 0],
  ['Archery1.0', 0, 0], ['Archery1.1', 0, 0], ['Archery2.0', 0, 1], ['Archery2.0', 0, 0], ['', 0, 0]];
document.getElementById('tree').innerHTML = nodes.map(([t, sub, on], i) =>
  `<div class="node ${sub ? 'sub' : ''}">${i ? '' : '<i class="minus"></i>'}<svg width="22" height="20"><use href="#ea"/>` +
  `<path d="M16.500 10l4.500 4.500-4.500 4.500-4.500-4.500z" fill="${on ? '#f2c23c' : '#a5a5a5'}" stroke="${on ? '#b5881a' : '#777'}"/></svg>${t}</div>`).join('');

// --- indicatore di connessione ---
const conn = document.getElementById('conn');
for (let i = 0; i < 8; i++) {
  el('rect', { x: i * 4, y: 0, width: 3, height: 10 - i, fill: '#6b7d0a' }, conn);
  el('rect', { x: i * 4, y: 12 - i, width: 3, height: 4 + i, fill: '#0d3f63' }, conn);
}
```
